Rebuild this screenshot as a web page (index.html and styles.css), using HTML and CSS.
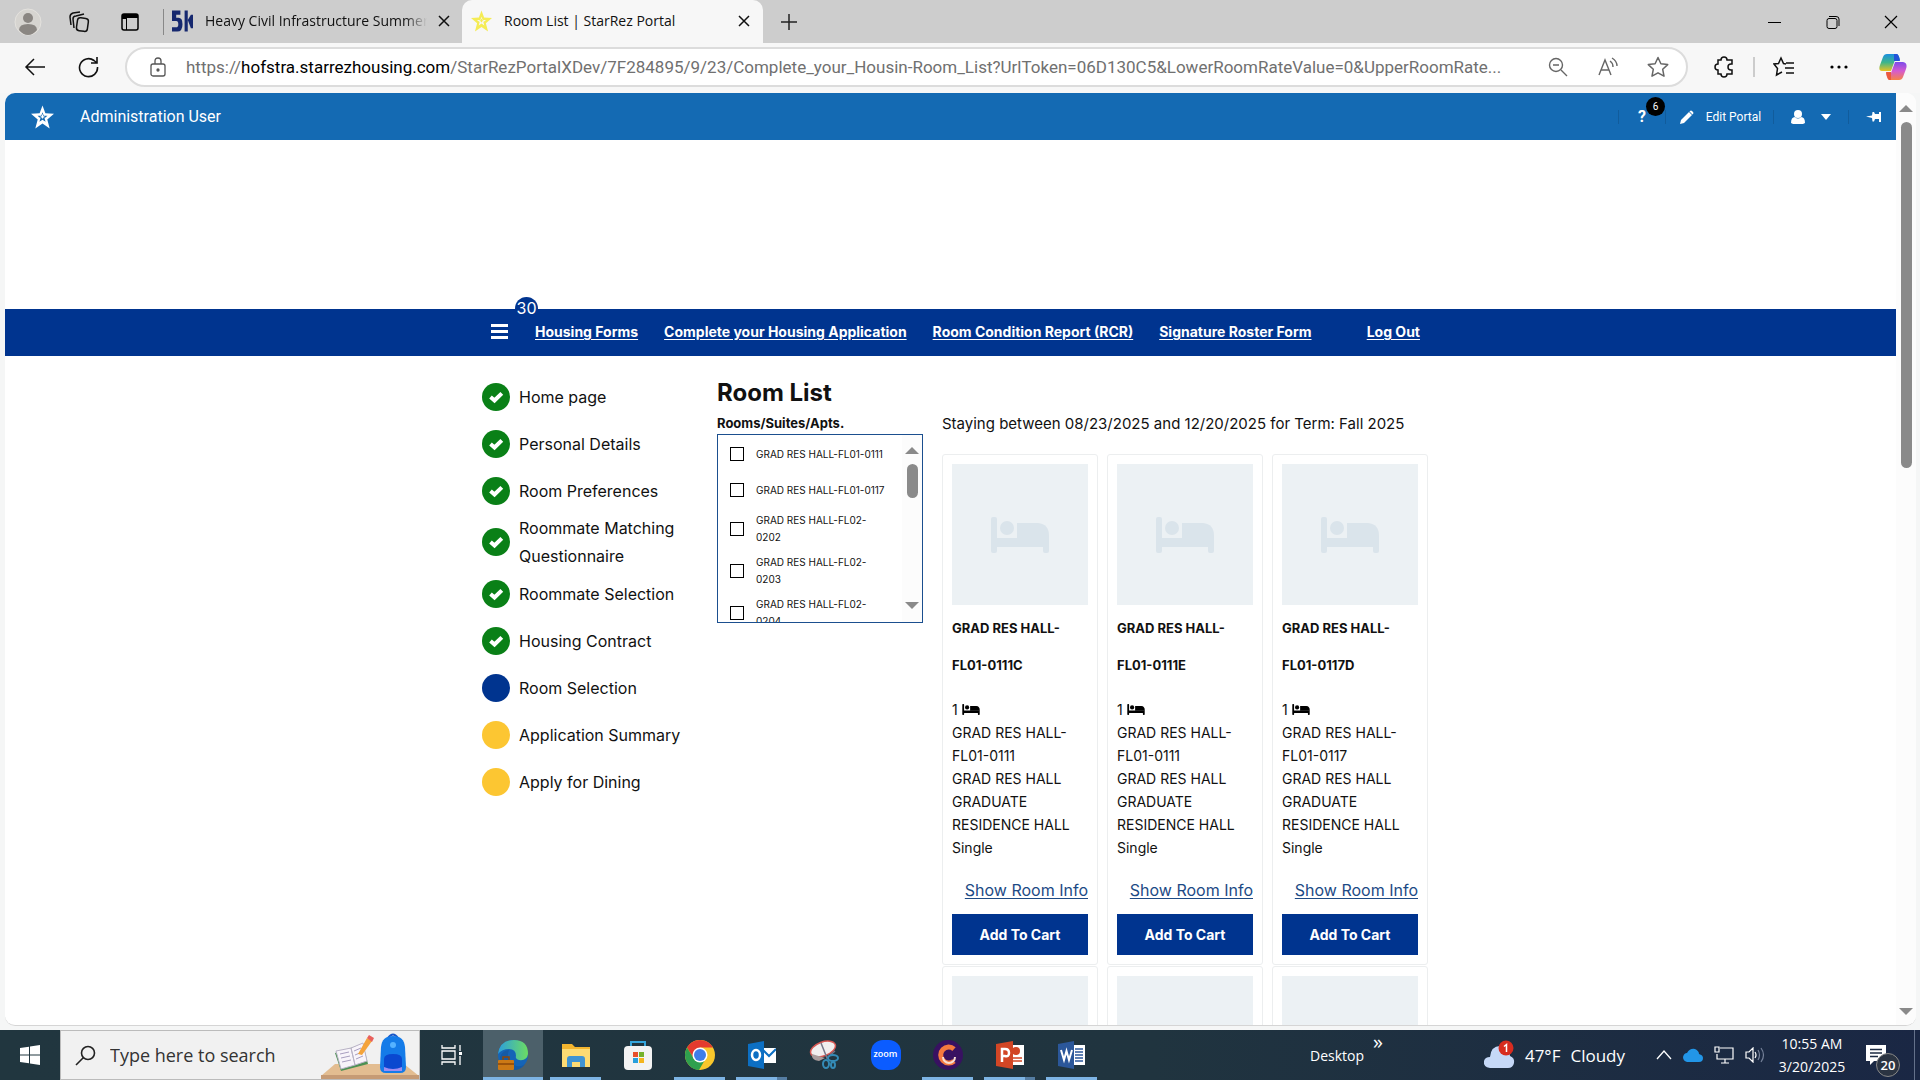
FILE: index.html
```html
<!DOCTYPE html>
<html lang="en">
<head>
<meta charset="utf-8">
<title>Room List | StarRez Portal</title>
<link rel="stylesheet" href="styles.css">
</head>
<body>
<svg class="defs" aria-hidden="true">
  <symbol id="bed" viewBox="0 0 60 36"><path d="M1 2Q1 0 3 0H5Q7 0 7 2V21H59V34Q59 36 57 36H55Q53 36 53 34V30H7V34Q7 36 5 36H3Q1 36 1 34Z"/><circle cx="17" cy="11" r="7"/><path d="M27 6H48Q59 7 59 19V22H27Z"/></symbol>
  <symbol id="check" viewBox="0 0 28 28"><path d="M8.500 14L12.500 17.500L19.800 10.300" fill="none" stroke="#fff" stroke-width="4"/></symbol>
  <symbol id="close" viewBox="0 0 12 12"><path d="M1 1L11 11M11 1L1 11" fill="none" stroke="currentColor" stroke-width="1.500"/></symbol>
  <symbol id="star" viewBox="0 0 24 24"><path d="M12 2.500L14.900 8.700L21.700 9.600L16.700 14.300L18 21.200L12 17.800L6 21.200L7.300 14.300L2.300 9.600L9.100 8.700Z" fill="none" stroke="currentColor" stroke-width="1.500" stroke-linejoin="round"/></symbol>
  <symbol id="starrez" viewBox="0 0 24 24"><path fill-rule="evenodd" fill="currentColor" d="M12 0L15 8L24 8.500L17 14.500L19.500 24L12 18.800L4.500 24L7 14.500L0 8.500L9 8ZM12 7L10.700 10.800H6.800L9.900 13.200L8.800 17L12 14.800L15.200 17L14.100 13.200L17.200 10.800H13.300Z"/><path d="M12 9.500V13.500M10 11.800H14" stroke="currentColor" stroke-width="1.200"/></symbol>
</svg>

<header class="tabstrip">
  <button class="tool" aria-label="Profile"><svg width="28" height="28" viewBox="0 0 28 28"><circle cx="14" cy="14" r="13" fill="#d6d4d0" stroke="#e4e2de"/><circle cx="14" cy="10" r="5" fill="#8a8682"/><path d="M5 22Q5 16 14 16T23 22Q19 27 14 27T5 22" fill="#8a8682"/></svg></button>
  <button class="tool" aria-label="Workspaces"><svg width="22" height="22" viewBox="0 0 22 22" fill="none" stroke="#111" stroke-width="1.500"><rect x="9" y="7" width="11" height="13" rx="3" transform="rotate(8 14 13)"/><path d="M6 17L5 8Q5 5 8 5L16 3M3 14L2 6Q2 3 5 2L12 1"/></svg></button>
  <button class="tool" aria-label="Tab actions"><svg width="20" height="20" viewBox="0 0 20 20"><rect x="2" y="2" width="16" height="16" rx="2" fill="none" stroke="#000" stroke-width="1.500"/><path d="M2 2H18V6H2ZM2 6H7V18H6V7H2Z"/></svg></button>
  <div class="tab">
    <svg class="favicon" viewBox="0 0 20 20"><path d="M8 0H0V10H4Q6 10 6 13T4 16H0V20H5Q10 20 10 13T5 7H4V4H8ZM12 0H15V20H12ZM15 9L18 4H20V17H18Z" fill="#16286f"/></svg>
    <span class="tab-name">Heavy Civil Infrastructure Summer</span>
    <button class="tab-close" aria-label="Close tab"><svg width="12" height="12"><use href="#close"/></svg></button>
  </div>
  <div class="tab active">
    <svg class="favicon pale"><use href="#starrez"/></svg>
    <span class="tab-name">Room List | StarRez Portal</span>
    <button class="tab-close" aria-label="Close tab"><svg width="12" height="12"><use href="#close"/></svg></button>
  </div>
  <button class="tool new-tab" aria-label="New tab"><svg width="18" height="18"><path d="M9 1V17M1 9H17" stroke="#222" stroke-width="1.500"/></svg></button>
  <div class="window-controls">
    <button aria-label="Minimize"><svg width="14" height="14"><path d="M0 7.500H13" stroke="#000"/></svg></button>
    <button aria-label="Restore"><svg width="14" height="14" fill="none" stroke="#000"><rect x="1" y="3.500" width="10" height="10" rx="2"/><path d="M3 1.500H10Q13 1.500 13 4V11"/></svg></button>
    <button aria-label="Close window"><svg width="14" height="14"><path d="M1 1L13 13M13 1L1 13" stroke="#000" stroke-width="1.200"/></svg></button>
  </div>
</header>

<div class="toolbar">
  <button class="tool" aria-label="Back"><svg width="22" height="20" fill="none" stroke="#111" stroke-width="1.500"><path d="M21 10H2M10 2L2 10L10 18"/></svg></button>
  <button class="tool" aria-label="Refresh"><svg width="22" height="22" fill="none" stroke="#111" stroke-width="1.600"><path d="M19.500 11A9 9 0 1 1 16 4.500L19 7M19 1V7H13"/></svg></button>
  <div class="address">
    <svg width="18" height="20" fill="none" stroke="#555" stroke-width="1.300"><rect x="2" y="7" width="14" height="12" rx="2"/><path d="M6 7V4Q6 1 9 1T12 4V7"/><circle cx="9" cy="13" r="1" fill="#555"/></svg>
    <div class="url">https://<b>hofstra.starrezhousing.com</b>/StarRezPortalXDev/7F284895/9/23/Complete_your_Housin-Room_List?UrlToken=06D130C5&amp;LowerRoomRateValue=0&amp;UpperRoomRate...</div>
    <button class="zoom-out" aria-label="Zoom"><svg width="20" height="20" fill="none" stroke="#666" stroke-width="1.400"><circle cx="8" cy="8" r="6.500"/><path d="M13 13L19 19M5 8H11"/></svg></button>
    <button aria-label="Read aloud"><svg width="22" height="20" fill="none" stroke="#666" stroke-width="1.400"><path d="M2 18L8 3L14 18M4 13H12M13 4Q16 6 16 10M15 1Q20 4 20 9"/></svg></button>
    <button aria-label="Add favorite"><svg class="grey" width="24" height="24"><use href="#star"/></svg></button>
  </div>
  <button class="tool ext" aria-label="Extensions"><svg width="22" height="22" fill="none" stroke="#111" stroke-width="1.500"><path d="M4 4H7Q7 1 10 1T13 4H18V8H17Q14 8 14 11T17 14H18V18H13Q13 21 10 21T7 18H4V14Q1 14 1 11T4 8Z"/></svg></button>
  <button class="tool fav" aria-label="Favorites"><svg width="22" height="22" fill="none" stroke="#111" stroke-width="1.500"><path d="M13 8L10.500 7.500L8 2L5.500 7.500L1 8L4.500 12.500L3.500 19L9 16M13 7H21M12 12H21M13 17H21"/></svg></button>
  <button class="tool" aria-label="More"><svg width="18" height="6"><circle cx="2" cy="3" r="1.600"/><circle cx="9" cy="3" r="1.600"/><circle cx="16" cy="3" r="1.600"/></svg></button>
  <button class="tool" aria-label="Copilot"><svg width="28" height="28" viewBox="0 0 28 28"><defs><linearGradient id="cpa" x2="0" y2="1"><stop stop-color="#1b8fe0"/><stop offset=".5" stop-color="#3fb58a"/><stop offset="1" stop-color="#e8c322"/></linearGradient><linearGradient id="cpb" x2="0" y2="1"><stop stop-color="#7b4bea"/><stop offset=".5" stop-color="#d55bd0"/><stop offset="1" stop-color="#f78247"/></linearGradient></defs><path d="M8 1H18Q20 2 21 7H16L12 18H3Q-1 18 1 12L4 4Q5 1 8 1" fill="url(#cpa)"/><path d="M15 1H18Q20 2 21 8H15Z" fill="#2354d8"/><path d="M20 27H10Q8 26 7 20H12L16 9H24Q29 10 27 16L24 24Q23 27 20 27" fill="url(#cpb)"/><path d="M12 27H10Q8 25 7 19H12Z" fill="#eb5a3c"/></svg></button>
</div>

<div class="viewport">
  <div class="page">
    <div class="admin">
      <svg class="admin-logo"><use href="#starrez"/></svg>
      <span class="admin-user">Administration User</span>
      <button class="help" aria-label="Help"><strong>?</strong><span class="help-count">6</span></button>
      <button class="edit"><svg width="14" height="14" fill="#fff"><path d="M1 10L9 2L12 5L4 13L0 14ZM10 1Q11 0 12 1L13 2Q14 3 13 4L12.500 4.500L9.500 1.500Z"/></svg>Edit Portal</button>
      <button class="user" aria-label="Account"><svg width="14" height="14" fill="#fff"><circle cx="7" cy="4" r="4"/><path d="M0 13Q0 7 4 7Q7 10 10 7Q14 7 14 13L12 14H2Z"/></svg><svg width="10" height="6" fill="#fff"><path d="M0 0H10L5 6Z"/></svg></button>
      <button class="pin" aria-label="Pin"><svg width="16" height="12" fill="#fff"><path d="M0 5.500L6 4.500L6.500 1H8L9 3H13V1H15V11H13V8H9L8 10.500H6.500L6 7Z"/></svg></button>
    </div>

    <nav class="site-nav">
      <div class="container nav-row">
        <button class="burger" aria-label="Menu"><svg width="17" height="15"><path d="M0 1.500H17M0 7.500H17M0 13.500H17" stroke="#fff" stroke-width="3"/></svg><span class="burger-count">30</span></button>
        <a href="#">Housing Forms</a>
        <a href="#">Complete your Housing Application</a>
        <a href="#">Room Condition Report (RCR)</a>
        <a href="#">Signature Roster Form</a>
        <a href="#" class="logout">Log Out</a>
      </div>
    </nav>

    <div class="container content">
      <ol class="steps">
        <li><svg class="dot done"><use href="#check"/></svg><span>Home page</span></li>
        <li><svg class="dot done"><use href="#check"/></svg><span>Personal Details</span></li>
        <li><svg class="dot done"><use href="#check"/></svg><span>Room Preferences</span></li>
        <li><svg class="dot done"><use href="#check"/></svg><span>Roommate Matching Questionnaire</span></li>
        <li><svg class="dot done"><use href="#check"/></svg><span>Roommate Selection</span></li>
        <li><svg class="dot done"><use href="#check"/></svg><span>Housing Contract</span></li>
        <li><svg class="dot current"></svg><span>Room Selection</span></li>
        <li><svg class="dot todo"></svg><span>Application Summary</span></li>
        <li><svg class="dot todo"></svg><span>Apply for Dining</span></li>
      </ol>

      <main class="rooms">
        <h1>Room List</h1>
        <div class="rooms-body">
          <fieldset class="filter">
            <legend>Rooms/Suites/Apts.</legend>
            <div class="filter-box">
              <div class="filter-list">
                <label><input type="checkbox"><span>GRAD RES HALL-FL01-0111</span></label>
                <label><input type="checkbox"><span>GRAD RES HALL-FL01-0117</span></label>
                <label><input type="checkbox"><span>GRAD RES HALL-FL02-<br>0202</span></label>
                <label><input type="checkbox"><span>GRAD RES HALL-FL02-<br>0203</span></label>
                <label><input type="checkbox"><span>GRAD RES HALL-FL02-<br>0204</span></label>
              </div>
              <div class="scroll small"><i class="up"></i><i class="thumb"></i><i class="down"></i></div>
            </div>
          </fieldset>

          <section class="results">
            <p class="stay">Staying between 08/23/2025 and 12/20/2025 for Term: Fall 2025</p>
            <div class="cards">
              <article class="card">
                <div class="photo"><svg><use href="#bed"/></svg></div>
                <h2>GRAD RES HALL-<br>FL01-0111C</h2>
                <p class="beds">1 <svg><use href="#bed"/></svg></p>
                <p class="facts">GRAD RES HALL-<br>FL01-0111<br>GRAD RES HALL<br>GRADUATE<br>RESIDENCE HALL<br>Single</p>
                <a href="#" class="info">Show Room Info</a>
                <button class="add">Add To Cart</button>
              </article>
              <article class="card">
                <div class="photo"><svg><use href="#bed"/></svg></div>
                <h2>GRAD RES HALL-<br>FL01-0111E</h2>
                <p class="beds">1 <svg><use href="#bed"/></svg></p>
                <p class="facts">GRAD RES HALL-<br>FL01-0111<br>GRAD RES HALL<br>GRADUATE<br>RESIDENCE HALL<br>Single</p>
                <a href="#" class="info">Show Room Info</a>
                <button class="add">Add To Cart</button>
              </article>
              <article class="card">
                <div class="photo"><svg><use href="#bed"/></svg></div>
                <h2>GRAD RES HALL-<br>FL01-0117D</h2>
                <p class="beds">1 <svg><use href="#bed"/></svg></p>
                <p class="facts">GRAD RES HALL-<br>FL01-0117<br>GRAD RES HALL<br>GRADUATE<br>RESIDENCE HALL<br>Single</p>
                <a href="#" class="info">Show Room Info</a>
                <button class="add">Add To Cart</button>
              </article>
              <article class="card"><div class="photo"></div></article>
              <article class="card"><div class="photo"></div></article>
              <article class="card"><div class="photo"></div></article>
            </div>
          </section>
        </div>
      </main>
    </div>
  </div>
  <div class="scroll"><i class="up"></i><i class="thumb"></i><i class="down"></i></div>
</div>

<footer class="taskbar">
  <button class="start" aria-label="Start"><svg width="20" height="20" fill="#fff"><path d="M0 3L9 1.700V9.500H0ZM10 1.500L20 0V9.500H10ZM0 10.500H9V18.300L0 17ZM10 10.500H20V20L10 18.500Z"/></svg></button>
  <div class="search">
    <svg width="21" height="21" fill="none" stroke="#222" stroke-width="1.600"><circle cx="13" cy="8" r="6.500"/><path d="M8.500 12.500L1 20"/></svg>
    <input type="text" placeholder="Type here to search" aria-label="Type here to search">
    <svg class="doodle" width="98" height="46" viewBox="0 0 98 46"><path d="M14 31H83L98 43H0Z" fill="#e3bd91"/><path d="M0 42H98V46H0Z" fill="#c69b75"/><path d="M14 20L42 11L47 31L20 38Z" fill="#4d9153"/><path d="M15 18L30 15L34 32L20 36ZM30 15L42 10L46 28L34 32Z" fill="#f8f4fa" stroke="#b9b3c6"/><path d="M19 21L28 19M20 25L29 23M21 29L30 27M33 18L40 15M34 22L41 19M35 26L42 23" stroke="#a99fc0"/><path d="M37 21L46 5L51 8L41 22Z" fill="#f4a33a"/><path d="M46 5L48 2L53 5L51 9Z" fill="#e8605c"/><path d="M67 5Q72-2 77 5" fill="none" stroke="#1957c8" stroke-width="2"/><path d="M60 14Q61 3 72 3T84 14L85 34Q85 40 79 40H65Q59 40 59 34Z" fill="#147be8"/><path d="M63 26Q63 21 72 21T81 26V38H63Z" fill="#0a48d0"/><path d="M63 34Q72 38 81 34V38H63Z" fill="#9d8cf1"/><circle cx="72" cy="12" r="3" fill="#55b2ff"/></svg>
  </div>
  <button class="taskview" aria-label="Task view"><svg width="22" height="20" fill="none" stroke="#fff" stroke-width="1.300"><path d="M1 0V3H14V0M1 20V17H14V20M1 6H14V14H1ZM19 0V6M19 11V20"/><path d="M18 8.500H21" stroke-width="3"/></svg></button>
  <div class="apps">
    <button class="app edge running" aria-label="Edge"><svg width="32" height="32"><defs><linearGradient id="eg" x2="1"><stop stop-color="#2c9fdd"/><stop offset="1" stop-color="#6cdc62"/></linearGradient></defs><circle cx="16" cy="16" r="15" fill="#1564b7"/><path d="M1 15Q3 1 17 1T31 15Q30 22 22 21Q18 20 19 17Q19 10 12 10Q5 10 1 15" fill="url(#eg)"/><path d="M12 11Q8 22 17 26Q23 29 28 25Q24 31 16 31Q3 28 3 18Q6 11 12 11" fill="#155aa5"/><rect x="1" y="21" width="16" height="10" rx="1" fill="#cc7915"/><path d="M6 21V18H12V21M1 25H17" fill="none" stroke="#8c4709" stroke-width="1.500"/></svg></button>
    <button class="app running" aria-label="File Explorer"><svg width="30" height="26"><path d="M1 2H11L14 5H29V25H1Z" fill="#f3b52f"/><path d="M1 7H29V25H1Z" fill="#fddb73"/><path d="M6 25V17Q6 14 9 14H21Q24 14 24 17V25H19V20H11V25Z" fill="#3f93d2"/></svg></button>
    <button class="app" aria-label="Store"><svg width="30" height="30"><path d="M8 8V2H22V8" fill="none" stroke="#34a5dc" stroke-width="2"/><rect x="1" y="6" width="28" height="24" rx="4" fill="#f3f3f3"/><path d="M10 12H15V17H10Z" fill="#e8502c"/><path d="M16 12H21V17H16Z" fill="#75b22b"/><path d="M10 18H15V23H10Z" fill="#279fdc"/><path d="M16 18H21V23H16Z" fill="#f4b51d"/></svg></button>
    <button class="app running" aria-label="Chrome"><svg width="32" height="32"><circle cx="16" cy="16" r="15" fill="#f8c72c"/><path d="M3 8.500A15 15 0 0 1 29 8.500H16L10 20Z" fill="#e33b2e"/><path d="M3 8.500A15 15 0 0 0 15 31L22 19L10 20Z" fill="#2fa04e"/><circle cx="16" cy="16" r="7.500" fill="#fff"/><circle cx="16" cy="16" r="6" fill="#3f7de8"/></svg></button>
    <button class="app running multi" aria-label="Outlook"><svg width="28" height="28"><path d="M14 7H28V22H14Z" fill="#fff"/><path d="M14 8L21 15L28 8" fill="none" stroke="#0c6fc3" stroke-width="2"/><path d="M0 3L16 0V28L0 25Z" fill="#0c6fc3"/><ellipse cx="8" cy="14" rx="4" ry="5" fill="none" stroke="#fff" stroke-width="2.500"/></svg></button>
    <button class="app" aria-label="Snipping Tool"><svg width="30" height="30"><ellipse cx="14" cy="9" rx="13" ry="7" transform="rotate(-20 14 9)" fill="#f1eeee" stroke="#d65753" stroke-width="1.500"/><path d="M3 14L16 18L10 21Q2 20 3 14" fill="#a99c9c"/><path d="M12 3L18 18L26 11" fill="none" stroke="#778" stroke-width="1.500"/><g fill="none" stroke="#348bb6" stroke-width="2"><ellipse cx="24" cy="18" rx="5" ry="3"/><ellipse cx="17" cy="24" rx="3" ry="4"/><ellipse cx="24" cy="25" rx="2" ry="3"/></g></svg></button>
    <button class="app" aria-label="Zoom"><span class="zoom-logo">zoom</span></button>
    <button class="app running" aria-label="Clipchamp"><svg width="30" height="30"><circle cx="15" cy="15" r="15" fill="#381161"/><path d="M21 9A8 8 0 1 0 21 21" fill="none" stroke="#f5793f" stroke-width="5"/><path d="M22 17A6 6 0 0 1 10 17" fill="none" stroke="#f8ddd2" stroke-width="2"/></svg></button>
    <button class="app running multi" aria-label="PowerPoint"><svg width="28" height="28"><path d="M14 4H28V24H14Z" fill="#fff"/><path d="M16 17H26M16 20H26" stroke="#d24625" stroke-width="1.500"/><circle cx="20" cy="10" r="4" fill="#d24625"/><path d="M0 3L17 0V28L0 25Z" fill="#d24625"/><path d="M6 21V8H9Q13 8 13 12T9 15H6" fill="none" stroke="#fff" stroke-width="2.500"/></svg></button>
    <button class="app running" aria-label="Word"><svg width="28" height="28"><path d="M14 4H27V24H14Z" fill="#fff"/><path d="M17 8H25M17 11H25M17 14H25M17 17H25M17 20H25" stroke="#2b579a" stroke-width="1.300"/><path d="M0 3L16 0V28L0 25Z" fill="#2b579a"/><path d="M3 9L6 19L8.500 10L11 19L14 9" fill="none" stroke="#fff" stroke-width="2"/></svg></button>
  </div>
  <div class="tray">
    <span class="desktop">Desktop</span><span class="chevron">»</span>
    <button class="weather"><svg width="32" height="30"><path d="M7 28Q0 27 1 21Q2 17 7 17Q8 6 17 6T27 16Q32 18 31 23Q30 28 25 28Z" fill="#c5d8f7"/><circle cx="23" cy="8" r="7.500" fill="#d72c20"/><path d="M21 6.500L23.500 4.500V12" fill="none" stroke="#fff" stroke-width="1.500"/></svg><span>47°F</span><span>Cloudy</span></button>
    <div class="tray-icons">
      <svg width="16" height="10"><path d="M1 9L8 1L15 9" fill="none" stroke="#fff" stroke-width="1.300"/></svg>
      <svg width="20" height="14"><path d="M4 14Q0 13 0 9Q1 5 4 5Q7 0 12 1Q16 3 16 6Q20 7 20 10Q20 14 16 14Z" fill="#2296e8"/></svg>
      <svg width="20" height="18" fill="none" stroke="#fff" stroke-width="1.200"><path d="M6 2H19V13H3V8M11 13V17M7 17H15M1 1H5V6H1Z"/></svg>
      <svg width="20" height="16" fill="none" stroke="#fff" stroke-width="1.200"><path d="M1 5H4L8 1V15L4 11H1ZM10 5Q12 8 10 11"/><path d="M13 3Q16 8 13 13M16 1Q21 8 16 15" stroke="#76829a"/></svg>
    </div>
    <div class="clock"><span>10:55 AM</span><span>3/20/2025</span></div>
    <button class="notes" aria-label="Notifications"><svg width="20" height="20"><path d="M0 0H20V16H8L4 20V16H0Z" fill="#fff"/><path d="M4 4.500H16M4 8H16M4 11.500H12" stroke="#1c2a42" stroke-width="1.500"/></svg><span class="notes-count">20</span></button>
  </div>
</footer>
</body>
</html>
```
FILE: styles.css
```css
* { box-sizing: border-box; }
body {
  margin: 0; height: 100vh; display: flex; flex-direction: column; overflow: hidden;
  background: #f5f6f6; color: #111; font-family: "Open Sans", "Noto Sans", sans-serif;
}
button { border: 0; padding: 0; background: none; font: inherit; color: inherit; display: flex; align-items: center; justify-content: center; }
h1, h2, p, ol, fieldset, legend { margin: 0; padding: 0; border: 0; }
svg { flex: none; display: block; }
.defs { width: 0; height: 0; position: absolute; }

/* Browser tabs */
.tabstrip { height: 43px; flex: none; display: flex; align-items: center; background: #cdcdcd; padding-left: 2px; }
.tool { width: 51px; height: 40px; flex: none; }
.tab { height: 43px; width: 307px; display: flex; align-items: center; padding: 0 11px 2px 17px; font-size: 14px; position: relative; }
.tab:not(.active)::before { content: ""; width: 1px; height: 26px; background: #888; position: absolute; left: 8px; top: 9px; }
.tab.active { width: 301px; background: #f7f7f7; border-radius: 10px 10px 0 0; padding: 0 12px 2px 9px; }
.favicon { width: 21px; height: 22px; margin-right: 12px; }
.pale { color: #f5ec55; }
.tab-name { flex: 1; overflow: hidden; white-space: nowrap; }
.tab:not(.active) .tab-name { -webkit-mask-image: linear-gradient(90deg, #000 90%, transparent); mask-image: linear-gradient(90deg, #000 90%, transparent); }
.tab-close { width: 14px; margin-left: 10px; }
.window-controls { margin-left: auto; display: flex; }
.window-controls button { width: 58px; height: 43px; }

/* Browser toolbar */
.toolbar { height: 50px; flex: none; display: flex; align-items: center; background: #f7f7f7; padding: 0 0 2px 8px; }
.toolbar .tool { width: 54px; }
.toolbar .tool:nth-child(2) { margin-right: 9px; }
.address { flex: 1; min-width: 0; height: 40px; display: flex; align-items: center; background: #fff; border: 2px solid #dcdcdc; border-radius: 20px; padding: 0 15px 0 22px; }
.url { flex: 1; min-width: 0; margin-left: 19px; font-family: Roboto, sans-serif; font-size: 17px; color: #707070; white-space: nowrap; overflow: hidden; }
.url b { font-weight: 400; color: #000; }
.address button { width: 50px; }
.address .zoom-out { width: 28px; margin-right: 11px; }
.address button:last-child { width: 26px; margin-left: 12px; }
.grey { color: #666; }
.toolbar .ext { width: 67px; border-right: 2px solid #ccc; height: 20px; padding-left: 8px; }
.toolbar .fav { width: 57px; }

/* Web page area */
.viewport { flex: 1; min-height: 0; display: flex; margin: 0 4px 4px 5px; background: #fff; border-radius: 10px; overflow: hidden; border-bottom: 1px solid #d5d5d5; }
.page { flex: 1; min-width: 0; overflow: hidden; font-family: Inter, "Open Sans", sans-serif; }
.scroll { width: 20px; display: flex; flex-direction: column; align-items: center; padding: 12px 0 10px; background: #fcfcfc; }
.up, .down { border: 7px solid transparent; border-top: 0; border-bottom: 7px solid #8a8a8a; }
.down { border-top: 7px solid #8a8a8a; border-bottom: 0; margin-top: auto; }
.thumb { width: 11px; height: 346px; margin-top: 10px; border-radius: 6px; background: #8a8a8a; }

.admin { height: 47px; display: flex; align-items: center; background: #146ab3; color: #fff; padding: 0 14px 0 26px; font-family: Roboto, sans-serif; font-size: 12px; }
.admin-logo { width: 23px; height: 24px; }
.admin-user { margin: 0 auto 0 26px; font-size: 16px; }
.admin button { height: 14px; border-left: 1px solid #115c9c; }
.help { width: 47px; position: relative; font-size: 16px; }
.help-count { position: absolute; left: 27px; top: -13px; width: 19px; height: 19px; line-height: 19px; border-radius: 50%; background: #000; font-size: 10px; }
.edit { width: 108px; gap: 12px; padding-left: 2px; }
.user { width: 75px; gap: 16px; }
.admin .pin { width: 34px; justify-content: flex-end; }

.container { width: 100%; max-width: 955px; margin: 0 auto; padding: 0 0 0 9px; }
.site-nav { margin-top: 169px; background: #00348f; }
.nav-row { height: 47px; display: flex; align-items: center; gap: 26px; padding: 0 8px 2px 18px; }
.nav-row a { color: #fff; font-size: 14px; font-weight: 700; white-space: nowrap; text-underline-offset: 2px; }
.burger { position: relative; width: 17px; margin-right: 1px; }
.burger-count { position: absolute; left: 24px; top: -27px; width: 23px; height: 23px; line-height: 23px; border-radius: 50%; background: #00348f; color: #fff; font-size: 16px; }
.nav-row .logout { margin-left: auto; }

.content { display: flex; align-items: flex-start; padding-top: 17px; }
.steps { list-style: none; width: 235px; flex: none; font-size: 16px; line-height: 28px; }
.steps li { min-height: 47px; display: flex; align-items: center; gap: 9px; padding-right: 30px; }
.dot { width: 28px; height: 28px; border-radius: 50%; }
.done { background: #0a8017; }
.current { background: #00348f; }
.todo { background: #fcc632; }

.rooms { flex: 1; min-width: 0; }
h1 { font-size: 24px; line-height: 39px; }
.rooms-body { display: flex; align-items: flex-start; gap: 19px; }
.filter { width: 206px; flex: none; }
legend { font-size: 13px; font-weight: 700; line-height: 22px; }
.filter-box { height: 189px; border: 1px solid #1b4f8f; display: flex; overflow: hidden; }
.filter-list { flex: 1; display: flex; flex-direction: column; gap: 8px; padding: 5px 0 0 12px; font-size: 10px; line-height: 17px; white-space: nowrap; }
.filter-list label { min-height: 28px; flex: none; display: flex; align-items: center; gap: 12px; }
.filter-list input { appearance: none; width: 14px; height: 14px; flex: none; margin: 0; border: 1px solid #000; background: #fff; }
.filter-box .scroll { flex: none; padding: 12px 0 13px; }
.small .thumb { height: 34px; margin-top: 10px; }

.results { flex: 1; min-width: 0; }
.stay { font-size: 15px; line-height: 24px; padding-bottom: 18px; white-space: nowrap; }
.cards { display: grid; grid-template-columns: repeat(3, 1fr); gap: 1px 9px; }
.card { border: 1px solid #eceeef; border-radius: 3px; padding: 9px; display: flex; flex-direction: column; }
.photo { height: 141px; background: #ecf1f4; display: flex; align-items: center; justify-content: center; }
.photo svg { width: 60px; height: 36px; fill: #dae4eb; }
.card h2 { font-size: 13px; line-height: 37px; padding: 5px 0 14px; white-space: nowrap; }
.beds, .facts { font-size: 14px; line-height: 23px; white-space: nowrap; }
.beds { display: flex; align-items: center; gap: 4px; }
.beds svg { width: 18px; height: 11px; }
.info { align-self: flex-end; margin: 19px 0 12px; font-size: 16px; line-height: 24px; color: #1d4a85; white-space: nowrap; text-underline-offset: 2px; }
.add { height: 41px; background: #00348f; color: #fff; font-size: 14px; font-weight: 700; }

/* Taskbar */
.taskbar { height: 50px; flex: none; display: flex; color: #fff; background: linear-gradient(90deg, #21363f, #20343f 60%, #1a2744); }
.start { width: 60px; }
.search { width: 360px; display: flex; align-items: center; background: #f1f1f1; border: 1px solid #bbb; padding-left: 14px; }
.search input { flex: 1; min-width: 0; border: 0; background: none; padding: 0 0 0 14px; font: 18px "Open Sans", sans-serif; color: #333; }
.search input::placeholder { color: #333; opacity: 1; }
.doodle { align-self: flex-end; }
.taskview { width: 63px; }
.apps { display: flex; gap: 11px; }
.app { width: 51px; height: 50px; border-bottom: 3px solid transparent; padding-top: 2px; }
.edge { width: 60px; background: #4c606a; margin-right: -4px; }
.running { border-bottom-color: #7db4e4; }
.multi { border-image: linear-gradient(90deg, #7db4e4 80%, #557da2 80%) 0 0 3 0; }
.zoom-logo { width: 30px; height: 30px; border-radius: 12px; background: #0b5cff; font-size: 9px; font-weight: 600; line-height: 28px; }
.tray { margin-left: auto; display: flex; align-items: center; white-space: nowrap; }
.desktop { font-size: 14px; }
.chevron { font-size: 20px; line-height: 20px; margin: 0 100px 26px 9px; }
.weather { gap: 10px; font-size: 17px; }
.tray-icons { display: flex; align-items: center; gap: 11px; margin: 0 13px 0 31px; }
.clock { display: flex; flex-direction: column; align-items: center; width: 68px; font-size: 14px; line-height: 23px; }
.notes { position: relative; width: 69px; height: 50px; border-right: 1px solid #64718a; margin: 0 5px 0 0; padding-right: 8px; }
.notes-count { position: absolute; left: 30px; top: 23px; width: 24px; height: 24px; border: 1px solid #888; border-radius: 50%; background: #2b3442; font-size: 13px; font-weight: 600; line-height: 22px; }
```
